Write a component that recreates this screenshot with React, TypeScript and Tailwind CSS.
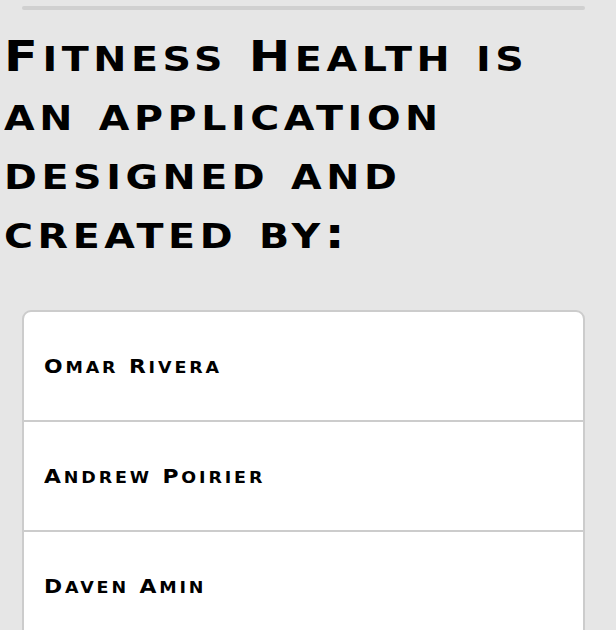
import React from "react";

function SmallCaps({ text, smallClass }: { text: string; smallClass: string }) {
  const parts: { s: string; small: boolean }[] = [];
  for (const ch of text) {
    const small = ch !== ch.toUpperCase();
    const last = parts[parts.length - 1];
    if (last && last.small === small) last.s += ch;
    else parts.push({ s: ch, small });
  }
  return (
    <>
      {parts.map((p, i) =>
        p.small ? (
          <span key={i} className={smallClass}>
            {p.s.toUpperCase()}
          </span>
        ) : (
          <span key={i}>{p.s}</span>
        )
      )}
    </>
  );
}

const names = ["Omar Rivera", "Andrew Poirier", "Daven Amin"];
const lines = ["Fitness Health is", "an application", "designed and", "created by:"];

export default function App() {
  return (
    <div className="min-h-[630px] bg-[#e6e6e6] overflow-hidden" style={{ fontFamily: '"DejaVu Sans", sans-serif' }}>
      <div className="ml-[22px] w-[563px] mt-[6px] h-[4px] rounded-full bg-[#d0d0d0]" />
      <h1 className="mt-[17px] pl-[4px] text-[43px] leading-[59px] font-bold text-black tracking-[4px]">
        {lines.map((l) => (
          <span key={l} className="block whitespace-nowrap origin-left scale-x-[1.15]">
            <SmallCaps text={l} smallClass="text-[34.4px] leading-none" />
          </span>
        ))}
      </h1>
      <div className="ml-[22px] w-[563px] mt-[47px] rounded-[9px] border-2 border-[#cccccc] bg-white overflow-hidden">
        {names.map((n, i) => (
          <div
            key={n}
            className={`flex items-center pl-[20px] text-[19px] font-bold text-black tracking-[2.5px] ${i < names.length - 1 ? "border-b-2 border-[#cccccc] h-[110px]" : "h-[108px]"}`}
          >
            <span className="inline-block origin-left scale-x-[1.15]">
              <SmallCaps text={n} smallClass="text-[15.2px] leading-none" />
            </span>
          </div>
        ))}
      </div>
    </div>
  );
}
